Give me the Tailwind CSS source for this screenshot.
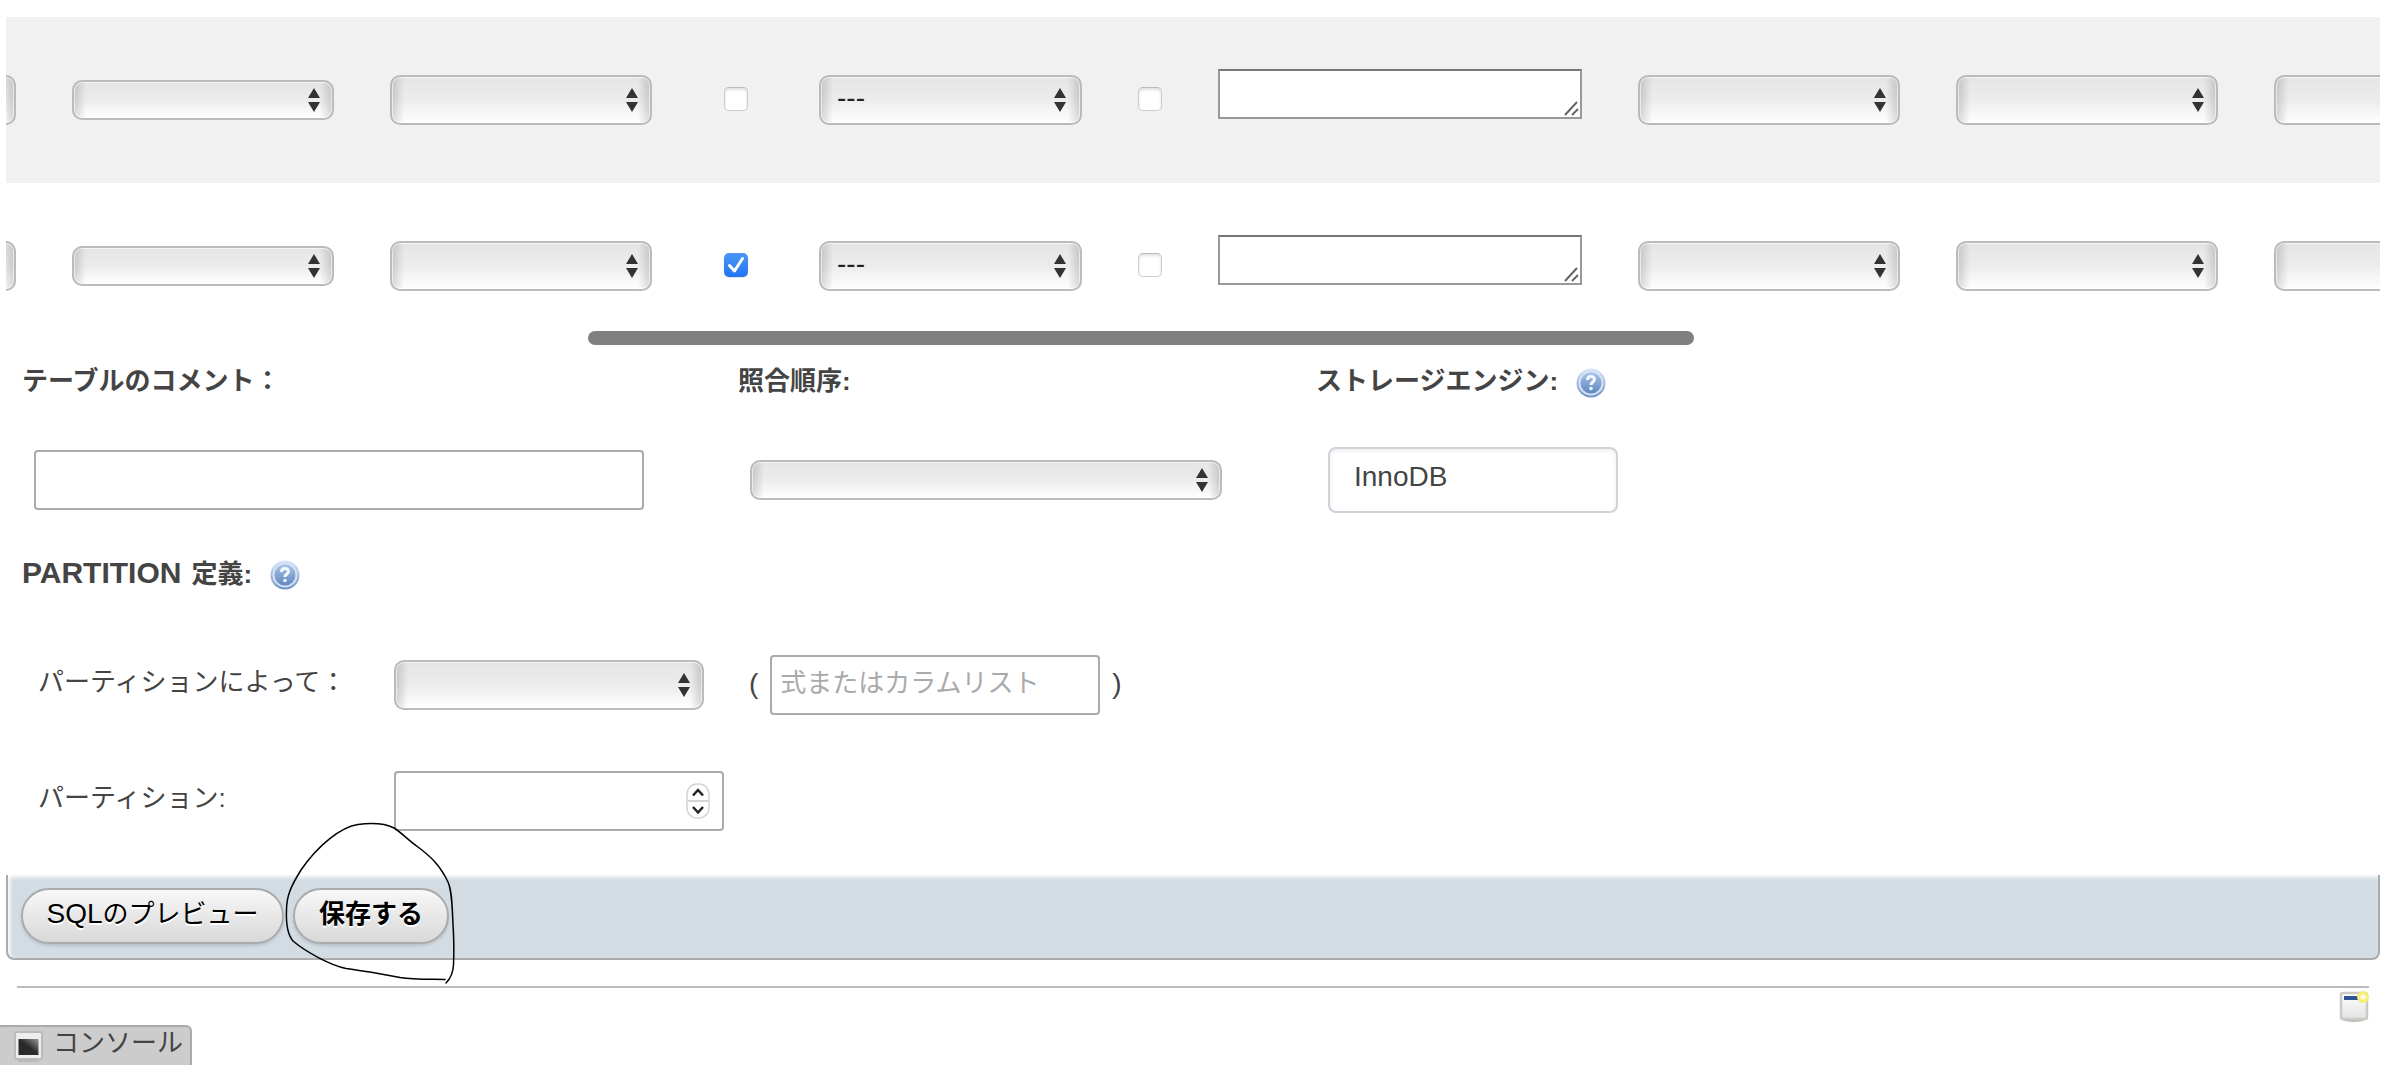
<!DOCTYPE html>
<html lang="ja">
<head>
<meta charset="utf-8">
<title>テーブル構造</title>
<script src="https://cdn.jsdelivr.net/npm/@tailwindcss/browser@4"></script>
</head>
<body class="bg-white text-[#444] text-[26px] leading-10 font-['Liberation_Sans','Noto_Sans_CJK_JP',sans-serif] overflow-x-hidden">

<svg class="absolute size-0" aria-hidden="true">
  <defs>
    <linearGradient id="ball" x1="0" y1="0" x2="0" y2="1"><stop offset="0" stop-color="#a9c3e8"/><stop offset="1" stop-color="#5f88be"/></linearGradient>
    <linearGradient id="ring" x1="0" y1="0" x2="0" y2="1"><stop offset="0" stop-color="#dbe6f6"/><stop offset="1" stop-color="#6a92c6"/></linearGradient>
    <linearGradient id="screen" x1="0" y1="1" x2="1" y2="0"><stop offset="0.5" stop-color="#2a2a2a"/><stop offset="1" stop-color="#999"/></linearGradient>
    <linearGradient id="pane" x1="0" y1="0" x2="0" y2="1"><stop offset="0" stop-color="#fff"/><stop offset="1" stop-color="#e2e2e2"/></linearGradient>
  </defs>
  <symbol id="arrows" viewBox="0 0 12 24"><path d="M6 0l6 10H0zM6 24l6-10H0z" fill="#333"/></symbol>
  <symbol id="grip" viewBox="0 0 15 15"><path d="M1 14L13 1M8 14l6-6" stroke="#666" stroke-width="2" fill="none"/></symbol>
  <symbol id="help" viewBox="0 0 30 30">
    <circle cx="15" cy="15" r="14.500" fill="url(#ring)"/><circle cx="15" cy="15" r="12.500" fill="#d4e1f4"/><circle cx="15" cy="15" r="10.500" fill="url(#ball)"/>
    <path d="M11.500 12c0-4.500 7-4.500 7-.500c0 2.500-3.500 2.500-3.500 5.500" fill="none" stroke="#f4f8fd" stroke-width="3"/><circle cx="15" cy="20.500" r="1.800" fill="#f4f8fd"/>
  </symbol>
</svg>

<main class="relative pl-[6px] pr-[13px] pt-[17px]">

  <div class="relative overflow-hidden">
    <table class="w-full table-fixed border-collapse">
      <colgroup>
        <col class="w-[38px]"><col class="w-[318px]"><col class="w-[318px]"><col class="w-[111px]"><col class="w-[319px]"><col class="w-[80px]"><col class="w-[420px]"><col class="w-[318px]"><col class="w-[318px]"><col>
      </colgroup>
      <tbody>
        <tr class="h-[166px] bg-[#f1f1f1]">
          <td class="pr-7 overflow-hidden"><span class="flex justify-end overflow-hidden"><select aria-label="種別" class="shrink-0 appearance-none w-[262px] h-[50px] rounded-[10px] border-2 border-[#bbb] bg-[linear-gradient(to_right,#00000026,#0000_12px,#0000_calc(100%-12px),#00000026),linear-gradient(#e5e5e5,#ececec_50%,#fff)] shadow-[inset_0_0_0_1px_#ffffff99]"></select></span></td>
          <td class="px-7"><span class="relative flex items-center"><select aria-label="デフォルト値" class="appearance-none w-full h-10 rounded-[10px] border-2 border-[#bbb] bg-[linear-gradient(to_right,#00000026,#0000_12px,#0000_calc(100%-12px),#00000026),linear-gradient(#e5e5e5,#ececec_50%,#fff)] shadow-[inset_0_0_0_1px_#ffffff99]"></select><svg class="absolute right-3.5 w-3 h-6 pointer-events-none"><use href="#arrows"/></svg></span></td>
          <td class="px-7"><span class="relative flex items-center"><select aria-label="属性" class="appearance-none w-full h-[50px] rounded-[10px] border-2 border-[#bbb] bg-[linear-gradient(to_right,#00000026,#0000_12px,#0000_calc(100%-12px),#00000026),linear-gradient(#e5e5e5,#ececec_50%,#fff)] shadow-[inset_0_0_0_1px_#ffffff99]"></select><svg class="absolute right-3.5 w-3 h-6 pointer-events-none"><use href="#arrows"/></svg></span></td>
          <td class="pb-0.5"><span class="flex justify-center"><input type="checkbox" aria-label="NULL" class="appearance-none size-6 rounded-[5px] border border-[#ccc] border-t-[#bbb] bg-white shadow-[inset_0_2px_3px_#0000001f]"></span></td>
          <td class="px-7"><span class="relative flex items-center"><select aria-label="インデックス" class="appearance-none w-full h-[50px] pl-4 pb-1 text-[28px] text-[#222] rounded-[10px] border-2 border-[#bbb] bg-[linear-gradient(to_right,#00000026,#0000_12px,#0000_calc(100%-12px),#00000026),linear-gradient(#e5e5e5,#ececec_50%,#fff)] shadow-[inset_0_0_0_1px_#ffffff99]"><option>---</option></select><svg class="absolute right-4 w-3 h-6 pointer-events-none"><use href="#arrows"/></svg></span></td>
          <td class="pb-0.5"><span class="flex justify-center"><input type="checkbox" aria-label="A_I" class="appearance-none size-6 rounded-[5px] border border-[#ccc] border-t-[#bbb] bg-white shadow-[inset_0_2px_3px_#0000001f]"></span></td>
          <td class="px-7 pb-3"><span class="relative flex"><textarea aria-label="コメント" rows="1" class="block w-full h-[50px] resize-none overflow-hidden bg-white border-2 border-[#999] border-t-[#777]"></textarea><svg class="absolute right-[3px] bottom-[3px] size-[15px] pointer-events-none"><use href="#grip"/></svg></span></td>
          <td class="px-7"><span class="relative flex items-center"><select aria-label="仮想性" class="appearance-none w-full h-[50px] rounded-[10px] border-2 border-[#bbb] bg-[linear-gradient(to_right,#00000026,#0000_12px,#0000_calc(100%-12px),#00000026),linear-gradient(#e5e5e5,#ececec_50%,#fff)] shadow-[inset_0_0_0_1px_#ffffff99]"></select><svg class="absolute right-3.5 w-3 h-6 pointer-events-none"><use href="#arrows"/></svg></span></td>
          <td class="px-7"><span class="relative flex items-center"><select aria-label="メディアタイプ" class="appearance-none w-full h-[50px] rounded-[10px] border-2 border-[#bbb] bg-[linear-gradient(to_right,#00000026,#0000_12px,#0000_calc(100%-12px),#00000026),linear-gradient(#e5e5e5,#ececec_50%,#fff)] shadow-[inset_0_0_0_1px_#ffffff99]"></select><svg class="absolute right-3.5 w-3 h-6 pointer-events-none"><use href="#arrows"/></svg></span></td>
          <td class="pl-7 overflow-hidden"><span class="flex overflow-hidden"><select aria-label="表示変換" class="shrink-0 appearance-none w-[262px] h-[50px] rounded-[10px] border-2 border-[#bbb] bg-[linear-gradient(to_right,#00000026,#0000_12px,#0000_calc(100%-12px),#00000026),linear-gradient(#e5e5e5,#ececec_50%,#fff)] shadow-[inset_0_0_0_1px_#ffffff99]"></select></span></td>
        </tr>
        <tr class="h-[166px]">
          <td class="pr-7 overflow-hidden"><span class="flex justify-end overflow-hidden"><select aria-label="種別" class="shrink-0 appearance-none w-[262px] h-[50px] rounded-[10px] border-2 border-[#bbb] bg-[linear-gradient(to_right,#00000026,#0000_12px,#0000_calc(100%-12px),#00000026),linear-gradient(#e5e5e5,#ececec_50%,#fff)] shadow-[inset_0_0_0_1px_#ffffff99]"></select></span></td>
          <td class="px-7"><span class="relative flex items-center"><select aria-label="デフォルト値" class="appearance-none w-full h-10 rounded-[10px] border-2 border-[#bbb] bg-[linear-gradient(to_right,#00000026,#0000_12px,#0000_calc(100%-12px),#00000026),linear-gradient(#e5e5e5,#ececec_50%,#fff)] shadow-[inset_0_0_0_1px_#ffffff99]"></select><svg class="absolute right-3.5 w-3 h-6 pointer-events-none"><use href="#arrows"/></svg></span></td>
          <td class="px-7"><span class="relative flex items-center"><select aria-label="属性" class="appearance-none w-full h-[50px] rounded-[10px] border-2 border-[#bbb] bg-[linear-gradient(to_right,#00000026,#0000_12px,#0000_calc(100%-12px),#00000026),linear-gradient(#e5e5e5,#ececec_50%,#fff)] shadow-[inset_0_0_0_1px_#ffffff99]"></select><svg class="absolute right-3.5 w-3 h-6 pointer-events-none"><use href="#arrows"/></svg></span></td>
          <td class="pb-0.5"><span class="relative flex justify-center items-center"><input type="checkbox" checked aria-label="NULL" class="appearance-none size-6 rounded-[5px] bg-linear-to-b from-[#4a97f8] to-[#2273f5] shadow-[0_1px_1px_#0000001f]"><svg class="absolute size-6 pointer-events-none" viewBox="0 0 24 24"><path d="M5.500 12.500l5 5.500l8-12.500" fill="none" stroke="#fff" stroke-width="3" stroke-linecap="round" stroke-linejoin="round"/></svg></span></td>
          <td class="px-7"><span class="relative flex items-center"><select aria-label="インデックス" class="appearance-none w-full h-[50px] pl-4 pb-1 text-[28px] text-[#222] rounded-[10px] border-2 border-[#bbb] bg-[linear-gradient(to_right,#00000026,#0000_12px,#0000_calc(100%-12px),#00000026),linear-gradient(#e5e5e5,#ececec_50%,#fff)] shadow-[inset_0_0_0_1px_#ffffff99]"><option>---</option></select><svg class="absolute right-4 w-3 h-6 pointer-events-none"><use href="#arrows"/></svg></span></td>
          <td class="pb-0.5"><span class="flex justify-center"><input type="checkbox" aria-label="A_I" class="appearance-none size-6 rounded-[5px] border border-[#ccc] border-t-[#bbb] bg-white shadow-[inset_0_2px_3px_#0000001f]"></span></td>
          <td class="px-7 pb-3"><span class="relative flex"><textarea aria-label="コメント" rows="1" class="block w-full h-[50px] resize-none overflow-hidden bg-white border-2 border-[#999] border-t-[#777]"></textarea><svg class="absolute right-[3px] bottom-[3px] size-[15px] pointer-events-none"><use href="#grip"/></svg></span></td>
          <td class="px-7"><span class="relative flex items-center"><select aria-label="仮想性" class="appearance-none w-full h-[50px] rounded-[10px] border-2 border-[#bbb] bg-[linear-gradient(to_right,#00000026,#0000_12px,#0000_calc(100%-12px),#00000026),linear-gradient(#e5e5e5,#ececec_50%,#fff)] shadow-[inset_0_0_0_1px_#ffffff99]"></select><svg class="absolute right-3.5 w-3 h-6 pointer-events-none"><use href="#arrows"/></svg></span></td>
          <td class="px-7"><span class="relative flex items-center"><select aria-label="メディアタイプ" class="appearance-none w-full h-[50px] rounded-[10px] border-2 border-[#bbb] bg-[linear-gradient(to_right,#00000026,#0000_12px,#0000_calc(100%-12px),#00000026),linear-gradient(#e5e5e5,#ececec_50%,#fff)] shadow-[inset_0_0_0_1px_#ffffff99]"></select><svg class="absolute right-3.5 w-3 h-6 pointer-events-none"><use href="#arrows"/></svg></span></td>
          <td class="pl-7 overflow-hidden"><span class="flex overflow-hidden"><select aria-label="表示変換" class="shrink-0 appearance-none w-[262px] h-[50px] rounded-[10px] border-2 border-[#bbb] bg-[linear-gradient(to_right,#00000026,#0000_12px,#0000_calc(100%-12px),#00000026),linear-gradient(#e5e5e5,#ececec_50%,#fff)] shadow-[inset_0_0_0_1px_#ffffff99]"></select></span></td>
        </tr>
      </tbody>
    </table>
    <div class="absolute bottom-1 left-[24.5%] w-[46.6%] h-3.5 rounded-full bg-[#808080]"></div>
  </div>

  <form class="pl-4">
    <div class="grid grid-cols-[716px_578px_1fr]">
      <div>
        <label for="comment" class="flex h-16 items-center font-bold">テーブルのコメント：</label>
        <div class="flex items-center h-[66px] mt-[34px] pl-3"><input id="comment" type="text" class="w-[610px] h-[60px] px-2 rounded border-2 border-[#aaa] bg-white"></div>
      </div>
      <div>
        <label for="collation" class="flex h-16 items-center font-bold">照合順序:</label>
        <div class="flex items-center h-[66px] mt-[34px] pl-3"><span class="relative flex items-center w-[472px]"><select id="collation" class="appearance-none w-full h-10 rounded-[10px] border-2 border-[#bbb] bg-[linear-gradient(to_right,#00000026,#0000_12px,#0000_calc(100%-12px),#00000026),linear-gradient(#e5e5e5,#ececec_50%,#fff)] shadow-[inset_0_0_0_1px_#ffffff99]"></select><svg class="absolute right-3.5 w-3 h-6 pointer-events-none"><use href="#arrows"/></svg></span></div>
      </div>
      <div>
        <div class="flex h-16 items-center gap-[18px] font-bold"><label for="engine">ストレージエンジン:</label><a href="#" class="pt-1" aria-label="ドキュメント"><svg class="block size-[30px]"><use href="#help"/></svg></a></div>
        <div class="flex items-center h-[66px] mt-[34px] pl-3"><input id="engine" type="text" value="InnoDB" class="w-[290px] h-[66px] pl-6 pb-1.5 text-[28px] rounded-lg border-2 border-[#ced4da] bg-white shadow-[inset_0_2px_4px_#00000014]"></div>
      </div>
    </div>

    <div class="flex items-center gap-[18px] h-16 mt-7 font-bold"><h2 class="flex items-baseline gap-2.5"><span class="text-[30px]">PARTITION</span> <span>定義:</span></h2><a href="#" class="pt-1" aria-label="ドキュメント"><svg class="block size-[30px]"><use href="#help"/></svg></a></div>

    <div class="flex items-center h-[60px] mt-[50px] pl-4">
      <label for="part-by" class="w-[356px] pb-1.5">パーティションによって：</label>
      <span class="relative flex items-center w-[310px]"><select id="part-by" class="appearance-none w-full h-[50px] rounded-[10px] border-2 border-[#bbb] bg-[linear-gradient(to_right,#00000026,#0000_12px,#0000_calc(100%-12px),#00000026),linear-gradient(#e5e5e5,#ececec_50%,#fff)] shadow-[inset_0_0_0_1px_#ffffff99]"></select><svg class="absolute right-3.5 w-3 h-6 pointer-events-none"><use href="#arrows"/></svg></span>
      <span class="ml-[45px] mr-3 text-[28px] pb-0.5">(</span>
      <input type="text" aria-label="式またはカラムリスト" placeholder="式またはカラムリスト" class="w-[330px] h-[60px] pl-2 pb-1 rounded border-2 border-[#aaa] bg-white placeholder:text-[#aaa] placeholder:opacity-100">
      <span class="ml-3 text-[28px] pb-0.5">)</span>
    </div>

    <div class="flex items-center h-[60px] mt-14 pl-4">
      <label for="part-count" class="w-[356px] pb-1.5">パーティション:</label>
      <span class="relative flex items-center w-[330px]"><input id="part-count" type="number" class="appearance-none [&::-webkit-inner-spin-button]:appearance-none w-full h-[60px] px-2 rounded border-2 border-[#aaa] bg-white">
        <svg class="absolute right-3.5 w-6 h-9 pointer-events-none" viewBox="0 0 24 36"><rect x="1" y="1" width="22" height="34" rx="10" fill="#fff" stroke="#d4d4d4" stroke-width="1.500"/><path d="M1 18h22" stroke="#d4d4d4" stroke-width="2"/><path d="M7 12.500L12 7l5 5.500M7 24l5 5.500l5-5.500" fill="none" stroke="#222" stroke-width="2.500"/></svg></span>
    </div>
  </form>

  <footer class="flex items-start gap-[9px] mt-11 pl-[13px] pt-[13px] pb-3.5 rounded-b-lg border-2 border-t-0 border-[#aaa] bg-[#d3dce3] shadow-[inset_2px_2px_4px_#fff]">
    <button type="button" class="w-[263px] h-14 pb-1 rounded-full border-2 border-[#aaa] bg-linear-to-b from-[#f8f8f8] to-[#d8d8d8] text-black text-shadow-[0_2px_0_#fff] shadow-[0_2px_3px_#0000001f]"><span class="text-[28px]">SQL</span>のプレビュー</button>
    <button type="submit" class="w-[156px] h-14 pb-1 rounded-full border-2 border-[#aaa] bg-linear-to-b from-[#f8f8f8] to-[#d8d8d8] font-bold text-black text-shadow-[0_2px_0_#fff] shadow-[0_2px_3px_#0000001f]">保存する</button>
  </footer>

  <hr class="mt-[26px] ml-[11px] mr-[11px] border-t-2 border-[#bbb]">
  <div class="flex justify-end pt-0.5 pr-[11px]">
    <a href="#" aria-label="新しいウィンドウを開く"><svg class="block w-[30px] h-8" viewBox="0 0 30 32"><path d="M3 29Q15 33 27 29" stroke="#bbb" stroke-width="2" fill="none"/><rect x="2" y="3" width="26" height="26" rx="2" fill="url(#pane)" stroke="#c9cbc5" stroke-width="2.500"/><path d="M5 8h15" stroke="#2f5597" stroke-width="4"/><circle cx="24" cy="7" r="6" fill="#f7ee7a"/><circle cx="24" cy="7" r="2.500" fill="#fffde6"/></svg></a>
  </div>

  <svg class="absolute left-[280px] top-[820px] w-[180px] h-[166px] pointer-events-none" viewBox="280 820 180 166" fill="none" stroke="#000" stroke-linecap="round"><path d="M445 979.500C434 979 415 980 400 977.500C380 973 362 971 346 968.500C330 965 306 952 293 941C287 934 286 922 286.500 910C286.500 896 291 886 301 870C318 845 341 827 358 824.500C370 823 384 823 394 828C402 833 408 840 418 847C430 856 440 865 448 882C452 891 452 905 453 924C454 940 454 954 453.500 965C453 974 450 979 446 983" stroke-width="1.500"/></svg>
</main>

<aside class="flex mt-[3px]">
  <button type="button" class="flex items-start gap-2.5 w-[192px] h-10 pl-3.5 rounded-tr-md border-t-2 border-r-2 border-[#aaa] bg-[#ccc] leading-8">
    <svg class="mt-1 w-[29px] h-[31px]" viewBox="0 0 29 31"><rect x="1" y="1" width="27" height="27" rx="2" fill="#eee" stroke="#bbb" stroke-width="2"/><path d="M4 30h21" stroke="#b5b5b5" stroke-width="1.500"/><rect x="4.500" y="8" width="20" height="16" fill="url(#screen)"/></svg>コンソール</button>
</aside>
</body>
</html>
